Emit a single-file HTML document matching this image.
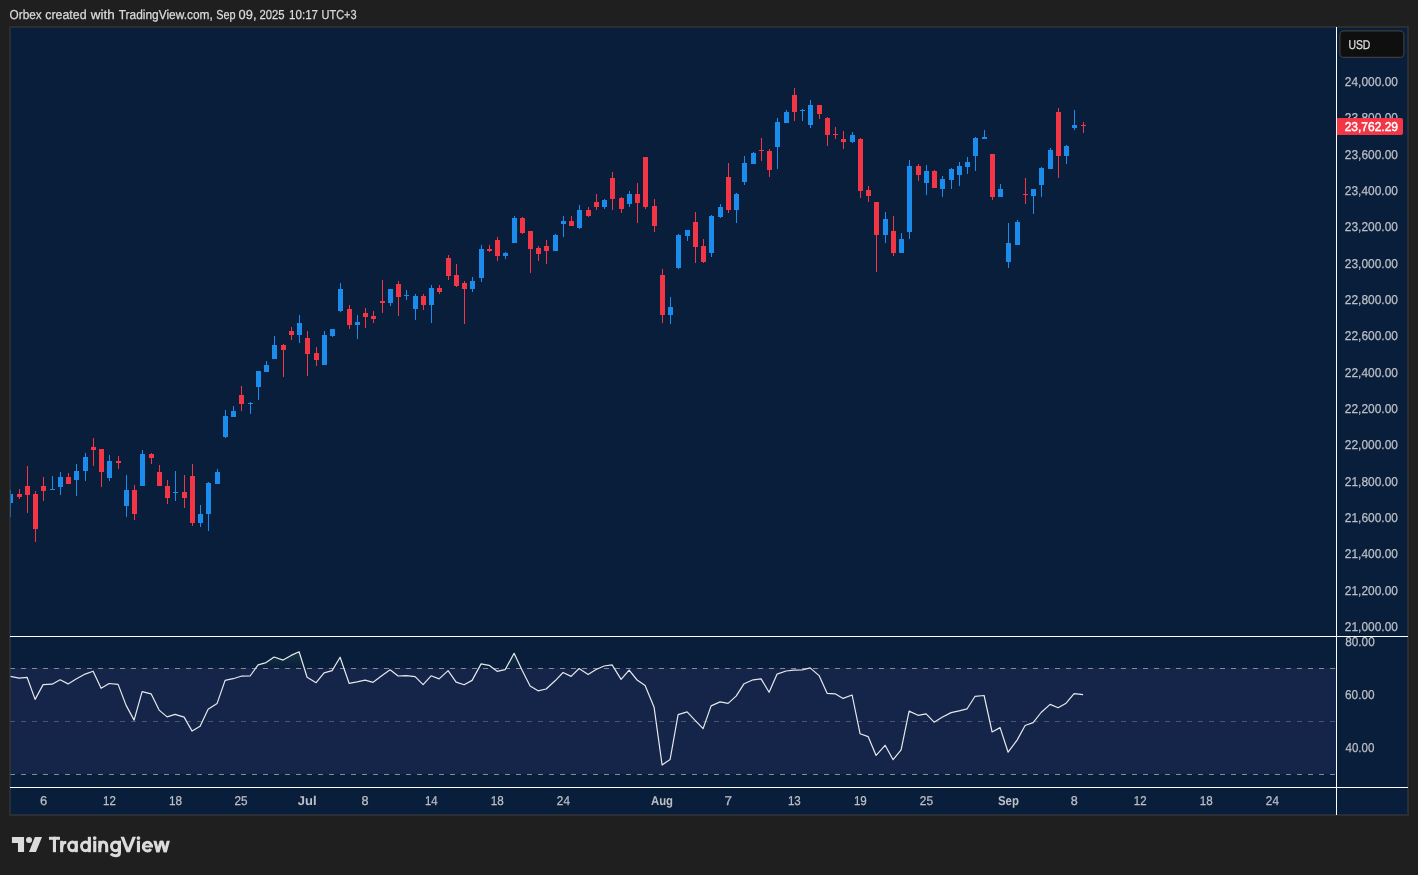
<!DOCTYPE html>
<html><head><meta charset="utf-8"><title>Chart</title>
<style>html,body{margin:0;padding:0;background:#1f1f1f;width:1418px;height:875px;overflow:hidden}</style></head>
<body>
<svg width="1418" height="875" viewBox="0 0 1418 875" style="position:absolute;left:0;top:0;display:block" font-family="'Liberation Sans', sans-serif">
<rect x="0" y="0" width="1418" height="875" fill="#1f1f1f"/>
<rect x="9" y="26" width="1400" height="790" fill="#2e2e2e"/>
<rect x="10" y="27" width="1398" height="788" fill="#091e3b"/>
<rect x="10" y="668" width="1326" height="106" fill="#152449"/>
<g shape-rendering="crispEdges">
<line x1="10" y1="668.5" x2="1336" y2="668.5" stroke="#848994" stroke-width="1" stroke-dasharray="5 6"/>
<line x1="10" y1="721.5" x2="1336" y2="721.5" stroke="#4c5670" stroke-width="1" stroke-dasharray="5 6"/>
<line x1="10" y1="774.5" x2="1336" y2="774.5" stroke="#848994" stroke-width="1" stroke-dasharray="5 6"/>
</g>
<g shape-rendering="crispEdges">
<rect x="10" y="490" width="1" height="27" fill="#1c8cec"/>
<rect x="10" y="494" width="3" height="9" fill="#1c8cec"/>
<rect x="19" y="489" width="1" height="10" fill="#f23645"/>
<rect x="17" y="494" width="5" height="3" fill="#f23645"/>
<rect x="27" y="466" width="1" height="47" fill="#f23645"/>
<rect x="25" y="486" width="5" height="9" fill="#f23645"/>
<rect x="35" y="491" width="1" height="51" fill="#f23645"/>
<rect x="33" y="494" width="5" height="35" fill="#f23645"/>
<rect x="43" y="477" width="1" height="24" fill="#f23645"/>
<rect x="41" y="486" width="5" height="5" fill="#f23645"/>
<rect x="52" y="476" width="1" height="14" fill="#1c8cec"/>
<rect x="50" y="489" width="5" height="1" fill="#1c8cec"/>
<rect x="60" y="472" width="1" height="23" fill="#1c8cec"/>
<rect x="58" y="477" width="5" height="10" fill="#1c8cec"/>
<rect x="68" y="473" width="1" height="11" fill="#f23645"/>
<rect x="66" y="477" width="5" height="7" fill="#f23645"/>
<rect x="76" y="464" width="1" height="32" fill="#1c8cec"/>
<rect x="74" y="471" width="5" height="9" fill="#1c8cec"/>
<rect x="85" y="453" width="1" height="28" fill="#1c8cec"/>
<rect x="83" y="457" width="5" height="14" fill="#1c8cec"/>
<rect x="93" y="438" width="1" height="28" fill="#f23645"/>
<rect x="91" y="447" width="5" height="3" fill="#f23645"/>
<rect x="101" y="449" width="1" height="38" fill="#f23645"/>
<rect x="99" y="449" width="5" height="23" fill="#f23645"/>
<rect x="109" y="455" width="1" height="26" fill="#1c8cec"/>
<rect x="107" y="461" width="5" height="17" fill="#1c8cec"/>
<rect x="118" y="456" width="1" height="13" fill="#f23645"/>
<rect x="116" y="461" width="5" height="2" fill="#f23645"/>
<rect x="126" y="475" width="1" height="42" fill="#1c8cec"/>
<rect x="124" y="490" width="5" height="16" fill="#1c8cec"/>
<rect x="134" y="485" width="1" height="35" fill="#f23645"/>
<rect x="132" y="490" width="5" height="24" fill="#f23645"/>
<rect x="142" y="450" width="1" height="36" fill="#1c8cec"/>
<rect x="140" y="454" width="5" height="32" fill="#1c8cec"/>
<rect x="151" y="453" width="1" height="11" fill="#f23645"/>
<rect x="149" y="454" width="5" height="4" fill="#f23645"/>
<rect x="159" y="465" width="1" height="21" fill="#f23645"/>
<rect x="157" y="472" width="5" height="14" fill="#f23645"/>
<rect x="167" y="480" width="1" height="24" fill="#f23645"/>
<rect x="165" y="486" width="5" height="12" fill="#f23645"/>
<rect x="175" y="471" width="1" height="30" fill="#1c8cec"/>
<rect x="173" y="492" width="5" height="1" fill="#1c8cec"/>
<rect x="184" y="475" width="1" height="33" fill="#f23645"/>
<rect x="182" y="492" width="5" height="6" fill="#f23645"/>
<rect x="192" y="464" width="1" height="62" fill="#f23645"/>
<rect x="190" y="476" width="5" height="47" fill="#f23645"/>
<rect x="200" y="505" width="1" height="22" fill="#1c8cec"/>
<rect x="198" y="514" width="5" height="9" fill="#1c8cec"/>
<rect x="208" y="482" width="1" height="49" fill="#1c8cec"/>
<rect x="206" y="483" width="5" height="31" fill="#1c8cec"/>
<rect x="217" y="469" width="1" height="15" fill="#1c8cec"/>
<rect x="215" y="472" width="5" height="12" fill="#1c8cec"/>
<rect x="225" y="410" width="1" height="28" fill="#1c8cec"/>
<rect x="223" y="416" width="5" height="21" fill="#1c8cec"/>
<rect x="233" y="406" width="1" height="11" fill="#1c8cec"/>
<rect x="231" y="411" width="5" height="6" fill="#1c8cec"/>
<rect x="241" y="386" width="1" height="25" fill="#f23645"/>
<rect x="239" y="395" width="5" height="9" fill="#f23645"/>
<rect x="250" y="402" width="1" height="12" fill="#1c8cec"/>
<rect x="248" y="403" width="5" height="1" fill="#1c8cec"/>
<rect x="258" y="371" width="1" height="29" fill="#1c8cec"/>
<rect x="256" y="371" width="5" height="16" fill="#1c8cec"/>
<rect x="266" y="361" width="1" height="11" fill="#1c8cec"/>
<rect x="264" y="365" width="5" height="7" fill="#1c8cec"/>
<rect x="274" y="336" width="1" height="23" fill="#1c8cec"/>
<rect x="272" y="345" width="5" height="14" fill="#1c8cec"/>
<rect x="283" y="344" width="1" height="33" fill="#f23645"/>
<rect x="281" y="345" width="5" height="5" fill="#f23645"/>
<rect x="291" y="327" width="1" height="13" fill="#f23645"/>
<rect x="289" y="331" width="5" height="4" fill="#f23645"/>
<rect x="299" y="315" width="1" height="28" fill="#1c8cec"/>
<rect x="297" y="323" width="5" height="12" fill="#1c8cec"/>
<rect x="307" y="331" width="1" height="45" fill="#f23645"/>
<rect x="305" y="338" width="5" height="16" fill="#f23645"/>
<rect x="316" y="347" width="1" height="19" fill="#f23645"/>
<rect x="314" y="353" width="5" height="7" fill="#f23645"/>
<rect x="324" y="331" width="1" height="34" fill="#1c8cec"/>
<rect x="322" y="335" width="5" height="30" fill="#1c8cec"/>
<rect x="332" y="329" width="1" height="8" fill="#1c8cec"/>
<rect x="330" y="329" width="5" height="7" fill="#1c8cec"/>
<rect x="340" y="283" width="1" height="29" fill="#1c8cec"/>
<rect x="338" y="289" width="5" height="22" fill="#1c8cec"/>
<rect x="349" y="305" width="1" height="24" fill="#f23645"/>
<rect x="347" y="309" width="5" height="16" fill="#f23645"/>
<rect x="357" y="315" width="1" height="24" fill="#1c8cec"/>
<rect x="355" y="322" width="5" height="3" fill="#1c8cec"/>
<rect x="365" y="308" width="1" height="20" fill="#f23645"/>
<rect x="363" y="313" width="5" height="4" fill="#f23645"/>
<rect x="373" y="311" width="1" height="12" fill="#f23645"/>
<rect x="371" y="316" width="5" height="3" fill="#f23645"/>
<rect x="382" y="280" width="1" height="33" fill="#f23645"/>
<rect x="380" y="301" width="5" height="2" fill="#f23645"/>
<rect x="390" y="289" width="1" height="17" fill="#1c8cec"/>
<rect x="388" y="289" width="5" height="14" fill="#1c8cec"/>
<rect x="398" y="281" width="1" height="35" fill="#f23645"/>
<rect x="396" y="284" width="5" height="13" fill="#f23645"/>
<rect x="406" y="290" width="1" height="10" fill="#1c8cec"/>
<rect x="404" y="295" width="5" height="1" fill="#1c8cec"/>
<rect x="415" y="294" width="1" height="26" fill="#1c8cec"/>
<rect x="413" y="296" width="5" height="13" fill="#1c8cec"/>
<rect x="423" y="294" width="1" height="16" fill="#f23645"/>
<rect x="421" y="296" width="5" height="9" fill="#f23645"/>
<rect x="431" y="285" width="1" height="38" fill="#1c8cec"/>
<rect x="429" y="288" width="5" height="17" fill="#1c8cec"/>
<rect x="439" y="285" width="1" height="9" fill="#f23645"/>
<rect x="437" y="288" width="5" height="4" fill="#f23645"/>
<rect x="448" y="255" width="1" height="25" fill="#f23645"/>
<rect x="446" y="258" width="5" height="18" fill="#f23645"/>
<rect x="456" y="264" width="1" height="23" fill="#f23645"/>
<rect x="454" y="275" width="5" height="11" fill="#f23645"/>
<rect x="464" y="281" width="1" height="43" fill="#f23645"/>
<rect x="462" y="283" width="5" height="6" fill="#f23645"/>
<rect x="472" y="277" width="1" height="15" fill="#1c8cec"/>
<rect x="470" y="281" width="5" height="8" fill="#1c8cec"/>
<rect x="481" y="245" width="1" height="37" fill="#1c8cec"/>
<rect x="479" y="249" width="5" height="29" fill="#1c8cec"/>
<rect x="489" y="245" width="1" height="7" fill="#f23645"/>
<rect x="487" y="249" width="5" height="2" fill="#f23645"/>
<rect x="497" y="237" width="1" height="24" fill="#f23645"/>
<rect x="495" y="240" width="5" height="16" fill="#f23645"/>
<rect x="505" y="252" width="1" height="7" fill="#1c8cec"/>
<rect x="503" y="253" width="5" height="3" fill="#1c8cec"/>
<rect x="514" y="216" width="1" height="27" fill="#1c8cec"/>
<rect x="512" y="218" width="5" height="25" fill="#1c8cec"/>
<rect x="522" y="217" width="1" height="17" fill="#f23645"/>
<rect x="520" y="218" width="5" height="15" fill="#f23645"/>
<rect x="530" y="231" width="1" height="42" fill="#f23645"/>
<rect x="528" y="231" width="5" height="18" fill="#f23645"/>
<rect x="538" y="246" width="1" height="15" fill="#f23645"/>
<rect x="536" y="248" width="5" height="6" fill="#f23645"/>
<rect x="546" y="240" width="1" height="24" fill="#f23645"/>
<rect x="544" y="246" width="5" height="5" fill="#f23645"/>
<rect x="555" y="234" width="1" height="17" fill="#1c8cec"/>
<rect x="553" y="235" width="5" height="16" fill="#1c8cec"/>
<rect x="563" y="216" width="1" height="21" fill="#1c8cec"/>
<rect x="561" y="221" width="5" height="3" fill="#1c8cec"/>
<rect x="571" y="216" width="1" height="10" fill="#f23645"/>
<rect x="569" y="221" width="5" height="5" fill="#f23645"/>
<rect x="579" y="205" width="1" height="24" fill="#1c8cec"/>
<rect x="577" y="210" width="5" height="18" fill="#1c8cec"/>
<rect x="588" y="207" width="1" height="10" fill="#f23645"/>
<rect x="586" y="210" width="5" height="6" fill="#f23645"/>
<rect x="596" y="194" width="1" height="16" fill="#f23645"/>
<rect x="594" y="202" width="5" height="5" fill="#f23645"/>
<rect x="604" y="199" width="1" height="10" fill="#1c8cec"/>
<rect x="602" y="200" width="5" height="7" fill="#1c8cec"/>
<rect x="612" y="172" width="1" height="38" fill="#f23645"/>
<rect x="610" y="178" width="5" height="21" fill="#f23645"/>
<rect x="621" y="197" width="1" height="16" fill="#f23645"/>
<rect x="619" y="198" width="5" height="11" fill="#f23645"/>
<rect x="629" y="191" width="1" height="16" fill="#1c8cec"/>
<rect x="627" y="194" width="5" height="10" fill="#1c8cec"/>
<rect x="637" y="183" width="1" height="40" fill="#f23645"/>
<rect x="635" y="194" width="5" height="9" fill="#f23645"/>
<rect x="645" y="157" width="1" height="52" fill="#f23645"/>
<rect x="643" y="157" width="5" height="50" fill="#f23645"/>
<rect x="654" y="199" width="1" height="33" fill="#f23645"/>
<rect x="652" y="206" width="5" height="20" fill="#f23645"/>
<rect x="662" y="269" width="1" height="54" fill="#f23645"/>
<rect x="660" y="275" width="5" height="40" fill="#f23645"/>
<rect x="670" y="297" width="1" height="27" fill="#1c8cec"/>
<rect x="668" y="307" width="5" height="8" fill="#1c8cec"/>
<rect x="678" y="234" width="1" height="35" fill="#1c8cec"/>
<rect x="676" y="235" width="5" height="33" fill="#1c8cec"/>
<rect x="687" y="230" width="1" height="11" fill="#1c8cec"/>
<rect x="685" y="230" width="5" height="6" fill="#1c8cec"/>
<rect x="695" y="212" width="1" height="51" fill="#f23645"/>
<rect x="693" y="222" width="5" height="25" fill="#f23645"/>
<rect x="703" y="239" width="1" height="24" fill="#f23645"/>
<rect x="701" y="246" width="5" height="16" fill="#f23645"/>
<rect x="711" y="215" width="1" height="42" fill="#1c8cec"/>
<rect x="709" y="216" width="5" height="37" fill="#1c8cec"/>
<rect x="720" y="204" width="1" height="14" fill="#1c8cec"/>
<rect x="718" y="207" width="5" height="10" fill="#1c8cec"/>
<rect x="728" y="163" width="1" height="50" fill="#f23645"/>
<rect x="726" y="177" width="5" height="33" fill="#f23645"/>
<rect x="736" y="193" width="1" height="30" fill="#1c8cec"/>
<rect x="734" y="194" width="5" height="16" fill="#1c8cec"/>
<rect x="744" y="156" width="1" height="29" fill="#1c8cec"/>
<rect x="742" y="163" width="5" height="19" fill="#1c8cec"/>
<rect x="753" y="152" width="1" height="12" fill="#1c8cec"/>
<rect x="751" y="153" width="5" height="11" fill="#1c8cec"/>
<rect x="761" y="138" width="1" height="23" fill="#f23645"/>
<rect x="759" y="150" width="5" height="1" fill="#f23645"/>
<rect x="769" y="149" width="1" height="28" fill="#f23645"/>
<rect x="767" y="151" width="5" height="19" fill="#f23645"/>
<rect x="777" y="118" width="1" height="51" fill="#1c8cec"/>
<rect x="775" y="122" width="5" height="25" fill="#1c8cec"/>
<rect x="786" y="110" width="1" height="13" fill="#1c8cec"/>
<rect x="784" y="112" width="5" height="11" fill="#1c8cec"/>
<rect x="794" y="88" width="1" height="33" fill="#f23645"/>
<rect x="792" y="95" width="5" height="17" fill="#f23645"/>
<rect x="802" y="109" width="1" height="12" fill="#1c8cec"/>
<rect x="800" y="110" width="5" height="1" fill="#1c8cec"/>
<rect x="810" y="100" width="1" height="28" fill="#1c8cec"/>
<rect x="808" y="105" width="5" height="20" fill="#1c8cec"/>
<rect x="819" y="105" width="1" height="14" fill="#f23645"/>
<rect x="817" y="105" width="5" height="9" fill="#f23645"/>
<rect x="827" y="117" width="1" height="29" fill="#f23645"/>
<rect x="825" y="118" width="5" height="17" fill="#f23645"/>
<rect x="835" y="127" width="1" height="12" fill="#f23645"/>
<rect x="833" y="134" width="5" height="1" fill="#f23645"/>
<rect x="843" y="131" width="1" height="18" fill="#f23645"/>
<rect x="841" y="139" width="5" height="3" fill="#f23645"/>
<rect x="852" y="132" width="1" height="11" fill="#1c8cec"/>
<rect x="850" y="135" width="5" height="7" fill="#1c8cec"/>
<rect x="860" y="138" width="1" height="60" fill="#f23645"/>
<rect x="858" y="139" width="5" height="52" fill="#f23645"/>
<rect x="868" y="186" width="1" height="16" fill="#f23645"/>
<rect x="866" y="190" width="5" height="6" fill="#f23645"/>
<rect x="876" y="202" width="1" height="70" fill="#f23645"/>
<rect x="874" y="202" width="5" height="33" fill="#f23645"/>
<rect x="885" y="212" width="1" height="31" fill="#1c8cec"/>
<rect x="883" y="219" width="5" height="16" fill="#1c8cec"/>
<rect x="893" y="216" width="1" height="40" fill="#f23645"/>
<rect x="891" y="231" width="5" height="22" fill="#f23645"/>
<rect x="901" y="233" width="1" height="20" fill="#1c8cec"/>
<rect x="899" y="239" width="5" height="14" fill="#1c8cec"/>
<rect x="909" y="160" width="1" height="79" fill="#1c8cec"/>
<rect x="907" y="166" width="5" height="66" fill="#1c8cec"/>
<rect x="918" y="164" width="1" height="17" fill="#f23645"/>
<rect x="916" y="166" width="5" height="9" fill="#f23645"/>
<rect x="926" y="165" width="1" height="30" fill="#1c8cec"/>
<rect x="924" y="171" width="5" height="12" fill="#1c8cec"/>
<rect x="934" y="170" width="1" height="18" fill="#f23645"/>
<rect x="932" y="171" width="5" height="17" fill="#f23645"/>
<rect x="942" y="176" width="1" height="21" fill="#1c8cec"/>
<rect x="940" y="179" width="5" height="10" fill="#1c8cec"/>
<rect x="951" y="168" width="1" height="21" fill="#1c8cec"/>
<rect x="949" y="169" width="5" height="11" fill="#1c8cec"/>
<rect x="959" y="162" width="1" height="24" fill="#1c8cec"/>
<rect x="957" y="166" width="5" height="9" fill="#1c8cec"/>
<rect x="967" y="157" width="1" height="17" fill="#1c8cec"/>
<rect x="965" y="162" width="5" height="5" fill="#1c8cec"/>
<rect x="975" y="137" width="1" height="34" fill="#1c8cec"/>
<rect x="973" y="138" width="5" height="18" fill="#1c8cec"/>
<rect x="984" y="130" width="1" height="9" fill="#1c8cec"/>
<rect x="982" y="137" width="5" height="2" fill="#1c8cec"/>
<rect x="992" y="154" width="1" height="46" fill="#f23645"/>
<rect x="990" y="154" width="5" height="43" fill="#f23645"/>
<rect x="1000" y="184" width="1" height="13" fill="#1c8cec"/>
<rect x="998" y="189" width="5" height="8" fill="#1c8cec"/>
<rect x="1008" y="223" width="1" height="45" fill="#1c8cec"/>
<rect x="1006" y="243" width="5" height="19" fill="#1c8cec"/>
<rect x="1017" y="220" width="1" height="25" fill="#1c8cec"/>
<rect x="1015" y="222" width="5" height="23" fill="#1c8cec"/>
<rect x="1025" y="178" width="1" height="26" fill="#f23645"/>
<rect x="1023" y="194" width="5" height="1" fill="#f23645"/>
<rect x="1033" y="189" width="1" height="25" fill="#1c8cec"/>
<rect x="1031" y="189" width="5" height="7" fill="#1c8cec"/>
<rect x="1041" y="167" width="1" height="30" fill="#1c8cec"/>
<rect x="1039" y="168" width="5" height="17" fill="#1c8cec"/>
<rect x="1050" y="148" width="1" height="21" fill="#1c8cec"/>
<rect x="1048" y="150" width="5" height="19" fill="#1c8cec"/>
<rect x="1058" y="108" width="1" height="70" fill="#f23645"/>
<rect x="1056" y="112" width="5" height="44" fill="#f23645"/>
<rect x="1066" y="145" width="1" height="19" fill="#1c8cec"/>
<rect x="1064" y="146" width="5" height="10" fill="#1c8cec"/>
<rect x="1074" y="110" width="1" height="20" fill="#1c8cec"/>
<rect x="1072" y="125" width="5" height="3" fill="#1c8cec"/>
<rect x="1083" y="122" width="1" height="11" fill="#f23645"/>
<rect x="1081" y="125" width="5" height="1" fill="#f23645"/>
</g>
<defs><clipPath id="c70"><rect x="10" y="636" width="1326" height="32"/></clipPath><linearGradient id="g70" gradientUnits="userSpaceOnUse" x1="0" y1="588" x2="0" y2="668"><stop offset="0" stop-color="#4caf50" stop-opacity="1"/><stop offset="1" stop-color="#4caf50" stop-opacity="0"/></linearGradient></defs>
<polygon clip-path="url(#c70)" points="10,668 10.3,676.4 19.1,678.1 27.1,677.3 35.1,699.4 43.1,684.6 52.1,684.2 60.1,679.8 68.1,683.9 76.1,679.1 85.1,674.1 93.1,671.2 101.1,688.3 109.1,683.5 118.1,684.4 126.1,705.4 134.1,720.1 142.1,691.7 151.1,693.8 159.1,710.1 167.1,716.9 175.1,714.4 184.1,717.1 192.1,731.1 200.1,726.3 208.1,709.2 217.1,703.4 225.1,680.4 233.1,678.7 241.1,676.2 250.1,676.0 258.1,664.8 266.1,662.6 274.1,657.0 283.1,660.1 291.1,655.4 299.1,651.8 307.1,677.3 316.1,682.7 324.1,672.9 332.1,670.6 340.1,657.2 349.1,683.3 357.1,681.9 365.1,680.2 373.1,682.3 382.1,675.6 390.1,669.8 398.1,676.0 406.1,675.6 415.1,676.6 423.1,684.6 431.1,675.8 439.1,678.9 448.1,670.6 456.1,682.1 464.1,684.8 472.1,680.4 481.1,663.9 489.1,665.3 497.1,671.3 505.1,669.7 514.1,653.3 522.1,670.2 530.1,686.0 538.1,690.8 546.1,689.0 555.1,680.8 563.1,672.5 571.1,676.4 579.1,668.5 588.1,674.6 596.1,669.5 604.1,666.0 612.1,664.9 621.1,679.4 629.1,670.2 637.1,680.0 645.1,685.6 654.1,707.3 662.1,764.9 670.1,759.5 678.1,714.6 687.1,711.9 695.1,720.3 703.1,728.6 711.1,705.9 720.1,701.9 728.1,703.4 736.1,696.1 744.1,683.7 753.1,679.8 761.1,678.9 769.1,692.3 777.1,674.1 786.1,671.0 794.1,670.2 802.1,670.0 810.1,667.9 819.1,675.6 827.1,693.3 835.1,693.8 843.1,698.4 852.1,695.0 860.1,733.8 868.1,736.6 876.1,755.4 885.1,745.3 893.1,759.7 901.1,749.9 909.1,711.1 918.1,715.3 926.1,713.8 934.1,722.2 942.1,717.3 951.1,712.6 959.1,710.9 967.1,708.8 975.1,696.3 984.1,695.5 992.1,732.0 1000.1,727.6 1008.1,752.2 1017.1,740.1 1025.1,725.5 1033.1,722.6 1041.1,712.5 1050.1,704.4 1058.1,707.7 1066.1,703.2 1074.1,693.6 1083.1,694.6 1083.1,668" fill="url(#g70)" opacity="0.8"/>
<polyline points="10.3,676.4 19.1,678.1 27.1,677.3 35.1,699.4 43.1,684.6 52.1,684.2 60.1,679.8 68.1,683.9 76.1,679.1 85.1,674.1 93.1,671.2 101.1,688.3 109.1,683.5 118.1,684.4 126.1,705.4 134.1,720.1 142.1,691.7 151.1,693.8 159.1,710.1 167.1,716.9 175.1,714.4 184.1,717.1 192.1,731.1 200.1,726.3 208.1,709.2 217.1,703.4 225.1,680.4 233.1,678.7 241.1,676.2 250.1,676.0 258.1,664.8 266.1,662.6 274.1,657.0 283.1,660.1 291.1,655.4 299.1,651.8 307.1,677.3 316.1,682.7 324.1,672.9 332.1,670.6 340.1,657.2 349.1,683.3 357.1,681.9 365.1,680.2 373.1,682.3 382.1,675.6 390.1,669.8 398.1,676.0 406.1,675.6 415.1,676.6 423.1,684.6 431.1,675.8 439.1,678.9 448.1,670.6 456.1,682.1 464.1,684.8 472.1,680.4 481.1,663.9 489.1,665.3 497.1,671.3 505.1,669.7 514.1,653.3 522.1,670.2 530.1,686.0 538.1,690.8 546.1,689.0 555.1,680.8 563.1,672.5 571.1,676.4 579.1,668.5 588.1,674.6 596.1,669.5 604.1,666.0 612.1,664.9 621.1,679.4 629.1,670.2 637.1,680.0 645.1,685.6 654.1,707.3 662.1,764.9 670.1,759.5 678.1,714.6 687.1,711.9 695.1,720.3 703.1,728.6 711.1,705.9 720.1,701.9 728.1,703.4 736.1,696.1 744.1,683.7 753.1,679.8 761.1,678.9 769.1,692.3 777.1,674.1 786.1,671.0 794.1,670.2 802.1,670.0 810.1,667.9 819.1,675.6 827.1,693.3 835.1,693.8 843.1,698.4 852.1,695.0 860.1,733.8 868.1,736.6 876.1,755.4 885.1,745.3 893.1,759.7 901.1,749.9 909.1,711.1 918.1,715.3 926.1,713.8 934.1,722.2 942.1,717.3 951.1,712.6 959.1,710.9 967.1,708.8 975.1,696.3 984.1,695.5 992.1,732.0 1000.1,727.6 1008.1,752.2 1017.1,740.1 1025.1,725.5 1033.1,722.6 1041.1,712.5 1050.1,704.4 1058.1,707.7 1066.1,703.2 1074.1,693.6 1083.1,694.6" fill="none" stroke="#e6e8ec" stroke-width="1.2" stroke-linejoin="round"/>
<path d="M10 27H1408V815H10Z M11 28V814H1407V28Z" fill="#3c3c3c" fill-opacity="0.55" fill-rule="evenodd" shape-rendering="crispEdges"/>
<g shape-rendering="crispEdges" fill="#ffffff">
<rect x="10" y="636" width="1398" height="1"/>
<rect x="10" y="787" width="1398" height="1"/>
<rect x="1336" y="27" width="1" height="788"/>
</g>
<rect x="1339.9" y="30.9" width="64" height="26.5" rx="4" fill="#0f0f0f" stroke="#3d3d3d" stroke-width="1.2"/>
<g fill="#dbdbdb"><path d="M11.92 837.05H24.05V851.9H17.96V843H11.92Z"/><circle cx="29.02" cy="840.02" r="3.0"/><path d="M34.9 837.05H42.03L35.93 851.9H28.95Z"/>
</g>
</svg>
<svg width="1418" height="875" viewBox="0 0 1418 875" style="position:absolute;left:0;top:0;display:block;will-change:transform" font-family="'Liberation Sans', sans-serif" text-rendering="geometricPrecision">
<text x="9.57" y="19.2" font-size="13" fill="#dbdbdb" stroke="#dbdbdb" stroke-width="0.25" textLength="32.09" lengthAdjust="spacingAndGlyphs">Orbex</text>
<text x="45.28" y="19.2" font-size="13" fill="#dbdbdb" stroke="#dbdbdb" stroke-width="0.25" textLength="41.29" lengthAdjust="spacingAndGlyphs">created</text>
<text x="90.78" y="19.2" font-size="13" fill="#dbdbdb" stroke="#dbdbdb" stroke-width="0.25" textLength="23.94" lengthAdjust="spacingAndGlyphs">with</text>
<text x="118.72" y="19.2" font-size="13" fill="#dbdbdb" stroke="#dbdbdb" stroke-width="0.25" textLength="94.05" lengthAdjust="spacingAndGlyphs">TradingView.com,</text>
<text x="216.17" y="19.2" font-size="13" fill="#dbdbdb" stroke="#dbdbdb" stroke-width="0.25" textLength="19.35" lengthAdjust="spacingAndGlyphs">Sep</text>
<text x="238.59" y="19.2" font-size="13" fill="#dbdbdb" stroke="#dbdbdb" stroke-width="0.25" textLength="17.91" lengthAdjust="spacingAndGlyphs">09,</text>
<text x="259.48" y="19.2" font-size="13" fill="#dbdbdb" stroke="#dbdbdb" stroke-width="0.25" textLength="25.14" lengthAdjust="spacingAndGlyphs">2025</text>
<text x="289.11" y="19.2" font-size="13" fill="#dbdbdb" stroke="#dbdbdb" stroke-width="0.25" textLength="28.94" lengthAdjust="spacingAndGlyphs">10:17</text>
<text x="321.49" y="19.2" font-size="13" fill="#dbdbdb" stroke="#dbdbdb" stroke-width="0.25" textLength="35.11" lengthAdjust="spacingAndGlyphs">UTC+3</text>
<text x="1344.84" y="85.8" font-size="12.8" fill="#bcbfc6" stroke="#bcbfc6" stroke-width="0.25" textLength="53.12" lengthAdjust="spacingAndGlyphs">24,000.00</text>
<text x="1344.84" y="122.1" font-size="12.8" fill="#bcbfc6" stroke="#bcbfc6" stroke-width="0.25" textLength="53.12" lengthAdjust="spacingAndGlyphs">23,800.00</text>
<text x="1344.84" y="158.5" font-size="12.8" fill="#bcbfc6" stroke="#bcbfc6" stroke-width="0.25" textLength="53.12" lengthAdjust="spacingAndGlyphs">23,600.00</text>
<text x="1344.84" y="194.8" font-size="12.8" fill="#bcbfc6" stroke="#bcbfc6" stroke-width="0.25" textLength="53.12" lengthAdjust="spacingAndGlyphs">23,400.00</text>
<text x="1344.84" y="231.1" font-size="12.8" fill="#bcbfc6" stroke="#bcbfc6" stroke-width="0.25" textLength="53.12" lengthAdjust="spacingAndGlyphs">23,200.00</text>
<text x="1344.84" y="267.5" font-size="12.8" fill="#bcbfc6" stroke="#bcbfc6" stroke-width="0.25" textLength="53.12" lengthAdjust="spacingAndGlyphs">23,000.00</text>
<text x="1344.84" y="303.8" font-size="12.8" fill="#bcbfc6" stroke="#bcbfc6" stroke-width="0.25" textLength="53.12" lengthAdjust="spacingAndGlyphs">22,800.00</text>
<text x="1344.84" y="340.1" font-size="12.8" fill="#bcbfc6" stroke="#bcbfc6" stroke-width="0.25" textLength="53.12" lengthAdjust="spacingAndGlyphs">22,600.00</text>
<text x="1344.84" y="376.5" font-size="12.8" fill="#bcbfc6" stroke="#bcbfc6" stroke-width="0.25" textLength="53.12" lengthAdjust="spacingAndGlyphs">22,400.00</text>
<text x="1344.84" y="412.8" font-size="12.8" fill="#bcbfc6" stroke="#bcbfc6" stroke-width="0.25" textLength="53.12" lengthAdjust="spacingAndGlyphs">22,200.00</text>
<text x="1344.84" y="449.1" font-size="12.8" fill="#bcbfc6" stroke="#bcbfc6" stroke-width="0.25" textLength="53.12" lengthAdjust="spacingAndGlyphs">22,000.00</text>
<text x="1344.84" y="485.5" font-size="12.8" fill="#bcbfc6" stroke="#bcbfc6" stroke-width="0.25" textLength="53.12" lengthAdjust="spacingAndGlyphs">21,800.00</text>
<text x="1344.84" y="521.8" font-size="12.8" fill="#bcbfc6" stroke="#bcbfc6" stroke-width="0.25" textLength="53.12" lengthAdjust="spacingAndGlyphs">21,600.00</text>
<text x="1344.84" y="558.1" font-size="12.8" fill="#bcbfc6" stroke="#bcbfc6" stroke-width="0.25" textLength="53.12" lengthAdjust="spacingAndGlyphs">21,400.00</text>
<text x="1344.84" y="594.5" font-size="12.8" fill="#bcbfc6" stroke="#bcbfc6" stroke-width="0.25" textLength="53.12" lengthAdjust="spacingAndGlyphs">21,200.00</text>
<text x="1344.84" y="630.8" font-size="12.8" fill="#bcbfc6" stroke="#bcbfc6" stroke-width="0.25" textLength="53.12" lengthAdjust="spacingAndGlyphs">21,000.00</text>
<text x="1345.2" y="646.0" font-size="12.8" fill="#bcbfc6" stroke="#bcbfc6" stroke-width="0.25" textLength="29.51" lengthAdjust="spacingAndGlyphs">80.00</text>
<text x="1345.06" y="699.1" font-size="12.8" fill="#bcbfc6" stroke="#bcbfc6" stroke-width="0.25" textLength="29.59" lengthAdjust="spacingAndGlyphs">60.00</text>
<text x="1345.46" y="752.1" font-size="12.8" fill="#bcbfc6" stroke="#bcbfc6" stroke-width="0.25" textLength="29.0" lengthAdjust="spacingAndGlyphs">40.00</text>
<text x="39.9" y="805.1" font-size="12.8" fill="#bcbfc6" stroke="#bcbfc6" stroke-width="0.25" textLength="7.23" lengthAdjust="spacingAndGlyphs">6</text>
<text x="103.0" y="805.1" font-size="12.8" fill="#bcbfc6" stroke="#bcbfc6" stroke-width="0.25" textLength="12.79" lengthAdjust="spacingAndGlyphs">12</text>
<text x="168.91" y="805.1" font-size="12.8" fill="#bcbfc6" stroke="#bcbfc6" stroke-width="0.25" textLength="13.12" lengthAdjust="spacingAndGlyphs">18</text>
<text x="234.53" y="805.1" font-size="12.8" fill="#bcbfc6" stroke="#bcbfc6" stroke-width="0.25" textLength="13.08" lengthAdjust="spacingAndGlyphs">25</text>
<text x="297.76" y="805.1" font-size="12.8" fill="#bcbfc6" font-weight="bold" textLength="18.77" lengthAdjust="spacingAndGlyphs">Jul</text>
<text x="361.48" y="805.1" font-size="12.8" fill="#bcbfc6" stroke="#bcbfc6" stroke-width="0.25" textLength="7.06" lengthAdjust="spacingAndGlyphs">8</text>
<text x="424.93" y="805.1" font-size="12.8" fill="#bcbfc6" stroke="#bcbfc6" stroke-width="0.25" textLength="12.71" lengthAdjust="spacingAndGlyphs">14</text>
<text x="490.87" y="805.1" font-size="12.8" fill="#bcbfc6" stroke="#bcbfc6" stroke-width="0.25" textLength="13.0" lengthAdjust="spacingAndGlyphs">18</text>
<text x="556.87" y="805.1" font-size="12.8" fill="#bcbfc6" stroke="#bcbfc6" stroke-width="0.25" textLength="13.08" lengthAdjust="spacingAndGlyphs">24</text>
<text x="650.98" y="805.1" font-size="12.8" fill="#bcbfc6" font-weight="bold" textLength="22.07" lengthAdjust="spacingAndGlyphs">Aug</text>
<text x="724.58" y="805.1" font-size="12.8" fill="#bcbfc6" stroke="#bcbfc6" stroke-width="0.25" textLength="7.54" lengthAdjust="spacingAndGlyphs">7</text>
<text x="787.91" y="805.1" font-size="12.8" fill="#bcbfc6" stroke="#bcbfc6" stroke-width="0.25" textLength="12.9" lengthAdjust="spacingAndGlyphs">13</text>
<text x="853.91" y="805.1" font-size="12.8" fill="#bcbfc6" stroke="#bcbfc6" stroke-width="0.25" textLength="12.93" lengthAdjust="spacingAndGlyphs">19</text>
<text x="919.86" y="805.1" font-size="12.8" fill="#bcbfc6" stroke="#bcbfc6" stroke-width="0.25" textLength="13.28" lengthAdjust="spacingAndGlyphs">25</text>
<text x="997.99" y="805.1" font-size="12.8" fill="#bcbfc6" font-weight="bold" textLength="20.96" lengthAdjust="spacingAndGlyphs">Sep</text>
<text x="1070.65" y="805.1" font-size="12.8" fill="#bcbfc6" stroke="#bcbfc6" stroke-width="0.25" textLength="7.0" lengthAdjust="spacingAndGlyphs">8</text>
<text x="1133.78" y="805.1" font-size="12.8" fill="#bcbfc6" stroke="#bcbfc6" stroke-width="0.25" textLength="12.78" lengthAdjust="spacingAndGlyphs">12</text>
<text x="1199.87" y="805.1" font-size="12.8" fill="#bcbfc6" stroke="#bcbfc6" stroke-width="0.25" textLength="13.0" lengthAdjust="spacingAndGlyphs">18</text>
<text x="1265.87" y="805.1" font-size="12.8" fill="#bcbfc6" stroke="#bcbfc6" stroke-width="0.25" textLength="13.08" lengthAdjust="spacingAndGlyphs">24</text>
<path d="M1337 118H1401a2 2 0 0 1 2 2V133a2 2 0 0 1 -2 2H1337Z" fill="#f23645"/>
<text x="1344.66" y="130.6" font-size="12.8" fill="#ffffff" stroke="#ffffff" stroke-width="0.45" textLength="53.34" lengthAdjust="spacingAndGlyphs">23,762.29</text>
<text x="1348.41" y="49.2" font-size="12.8" fill="#dcdcdc" stroke="#dcdcdc" stroke-width="0.3" textLength="21.97" lengthAdjust="spacingAndGlyphs">USD</text>
<g fill="#dbdbdb" stroke="none"><rect x="48.98" y="836.8" width="11.0" height="3.0"/><rect x="52.9" y="836.8" width="3.1" height="15.4"/><rect x="60.1" y="840.8" width="3.1" height="11.4"/><rect x="74.75" y="840.8" width="3.1" height="11.4"/><rect x="87.8" y="836.8" width="3.1" height="15.4"/><rect x="93.2" y="840.8" width="3.1" height="11.4"/><circle cx="94.7" cy="838.1" r="1.85"/><rect x="98.3" y="840.8" width="3.1" height="11.4"/><polygon points="120.5,836.8 124.0,836.8 128.2,847.8 132.5,836.8 136.0,836.8 129.9,852.2 126.5,852.2"/><rect x="136.9" y="840.8" width="3.1" height="11.4"/><circle cx="138.45" cy="838.1" r="1.85"/><rect x="143.4" y="845.4" width="9.6" height="2.1"/></g><g fill="none" stroke="#dbdbdb" stroke-width="3.0" stroke-linecap="butt" stroke-linejoin="miter"><path d="M61.65 848.5 C61.65 844.6 63.3 842.3 66.3 842.3"/><ellipse cx="72.45" cy="846.35" rx="3.9" ry="4.4" stroke-width="2.9"/><ellipse cx="85.5" cy="846.35" rx="4.0" ry="4.4" stroke-width="2.9"/><path stroke-width="3.1" d="M99.85 848 C99.85 843.8 101.4 842.0 103.3 842.0 C105.3 842.0 106.7 843.4 106.7 846.6 L106.7 852.2"/><ellipse cx="115.5" cy="846.35" rx="4.0" ry="4.35"/><path stroke-width="3.1" d="M119.45 840.8 L119.45 852.4 C119.45 855.2 117.7 855.7 115.5 855.7 C113.6 855.7 112.0 855.1 110.8 853.8"/><path d="M151.5 847.1 A4.1 4.4 0 1 0 150.9 848.95"/></g><defs><clipPath id="wclip"><rect x="150" y="840.8" width="22" height="11.4"/></clipPath></defs><g clip-path="url(#wclip)" fill="none" stroke="#dbdbdb" stroke-width="3.05" stroke-linecap="butt"><line x1="154.15" y1="837.90" x2="158.85" y2="856.10"/><line x1="156.87" y1="856.08" x2="162.38" y2="836.92"/><line x1="160.72" y1="836.92" x2="166.23" y2="856.08"/><line x1="164.23" y1="856.10" x2="169.07" y2="837.90"/></g>
</svg>
</body></html>
